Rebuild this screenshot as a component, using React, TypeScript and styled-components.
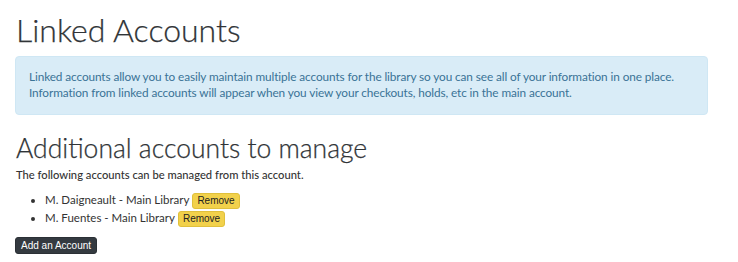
import React from 'react';
import styled, { createGlobalStyle } from 'styled-components';

const GlobalStyle = createGlobalStyle`
  html, body {
    margin: 0;
    padding: 0;
    background: #ffffff;
  }
  body {
    font-family: Lato, "Liberation Sans", sans-serif;
    color: #333333;
  }
`;

const Page = styled.main`
  display: flex;
  flex-direction: column;
  padding: 12px 30px 0 15px;
`;

const Title = styled.h1<{ $size: number; $line: number }>`
  margin: 0;
  padding-left: 1px;
  font-family: Lato, sans-serif;
  font-weight: 300;
  font-size: ${p => p.$size}px;
  line-height: ${p => p.$line}px;
  color: #303437;
  -webkit-text-stroke: 0.25px #303437;
`;

const Alert = styled.div`
  margin: 8px 0 18px;
  padding: 12px 13px 13px;
  background: #d9ecf7;
  border: 1px solid #cfe7f4;
  border-radius: 4px;
  color: #3a7396;
  font-size: 11.8px;
  line-height: 16px;
  letter-spacing: -0.1px;
  white-space: nowrap;
`;

const Lead = styled.p`
  margin: 4px 0 8px 1px;
  font-size: 11.2px;
  font-weight: 500;
  line-height: 16px;
`;

const List = styled.ul`
  margin: 0 0 10px;
  padding-left: 30px;
  font-size: 11.5px;
  line-height: 18px;
`;

const Item = styled.li`
  display: list-item;
`;

const Button = styled.button<{ $tone: 'warn' | 'dark' }>`
  font-family: "Liberation Sans", Arial, sans-serif;
  font-size: 10px;
  padding: 1px 4px;
  border-radius: 3px;
  cursor: pointer;
  vertical-align: middle;
  background: ${p => (p.$tone === 'warn' ? '#f2d14b' : '#343a40')};
  border: 1px solid ${p => (p.$tone === 'warn' ? '#e0c03c' : '#2b3035')};
  color: ${p => (p.$tone === 'warn' ? '#222222' : '#ffffff')};
`;

const RemoveButton = styled(Button)`
  margin-left: 3px;
  line-height: 12px;
`;

const AddButton = styled(Button)`
  align-self: flex-start;
  line-height: 13px;
  padding: 1px 5px;
`;

const accounts = ['M. Daigneault - Main Library', 'M. Fuentes - Main Library'];

const App: React.FunctionComponent = () => (
  <React.Fragment>
    <GlobalStyle />
    <Page>
      <Title $size={32} $line={36}>Linked Accounts</Title>
      <Alert>
        Linked accounts allow you to easily maintain multiple accounts for the library so you can see all of your information in one place.
        <br />
        Information from linked accounts will appear when you view your checkouts, holds, etc in the main account.
      </Alert>
      <Title as="h2" $size={26.5} $line={30}>Additional accounts to manage</Title>
      <Lead>The following accounts can be managed from this account.</Lead>
      <List>
        {accounts.map(name => (
          <Item key={name}>
            {name}
            <RemoveButton $tone="warn">Remove</RemoveButton>
          </Item>
        ))}
      </List>
      <AddButton $tone="dark">Add an Account</AddButton>
    </Page>
  </React.Fragment>
);

export default App;
